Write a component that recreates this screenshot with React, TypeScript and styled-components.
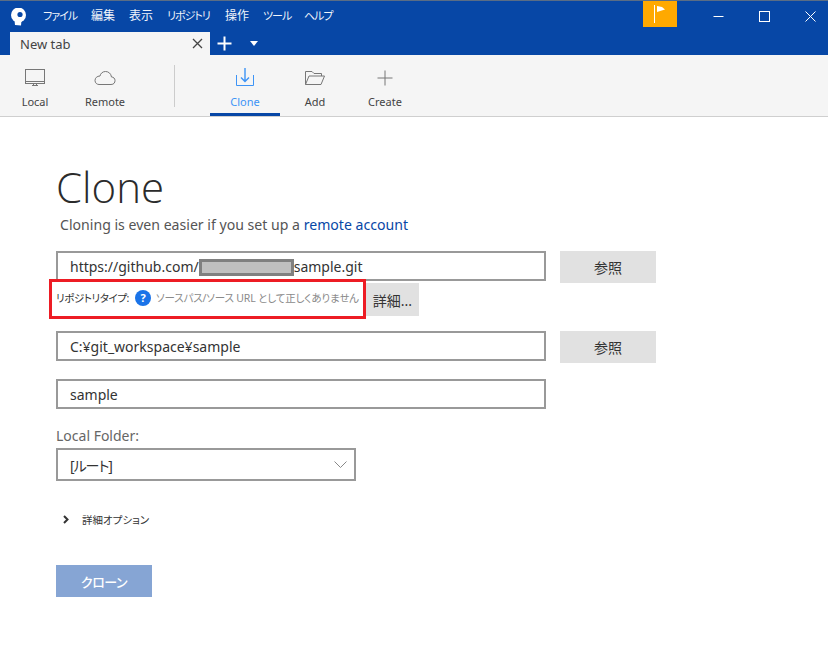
import React from "react";
import styled, { createGlobalStyle } from "styled-components";

const fontStack = `"Noto Sans", "Noto Sans CJK JP", sans-serif`;

const GlobalStyle = createGlobalStyle`
  html, body {
    margin: 0;
    padding: 0;
    background: #ffffff;
    font-family: ${fontStack};
    font-feature-settings: "palt";
  }
  * {
    box-sizing: border-box;
  }
`;

const Page = styled.div`
  width: 828px;
  height: 659px;
  overflow: hidden;
  display: flex;
  flex-direction: column;
`;

const TitleBar = styled.header`
  height: 55px;
  flex-shrink: 0;
  background: #0747a6;
  border-top: 1px solid #5a6d85;
  display: flex;
  flex-direction: column;
`;

const MenuRow = styled.div`
  height: 31px;
  display: flex;
`;

const LogoBox = styled.div`
  width: 43px;
  flex-shrink: 0;
  padding: 7px 0 0 10px;
`;

const MenuItem = styled.span<{ $w: number; $kana?: boolean }>`
  width: ${(p) => p.$w}px;
  flex-shrink: 0;
  padding-top: 6px;
  font-size: ${(p) => (p.$kana ? "11px" : "12px")};
  letter-spacing: ${(p) => (p.$kana ? "-1px" : "0")};
  line-height: 18px;
  color: #f0f4fa;
  white-space: nowrap;
`;

const FlagButton = styled.div`
  width: 34px;
  height: 26px;
  flex-shrink: 0;
  margin-left: auto;
  background: #ffa900;
  display: flex;
  align-items: center;
  justify-content: center;
`;

const WindowControls = styled.div`
  display: flex;
  flex-shrink: 0;
  margin: 0 -5px 0 18px;
`;

const WindowButton = styled.div`
  width: 46px;
  height: 30px;
  display: flex;
  align-items: center;
  justify-content: center;
`;

const TabRow = styled.div`
  height: 23px;
  display: flex;
  align-items: center;
  padding-left: 10px;
`;

const Tab = styled.div`
  width: 200px;
  height: 23px;
  background: #f5f5f5;
  display: flex;
  align-items: center;
  justify-content: space-between;
  padding: 0 7px 0 10px;
  font-size: 13px;
  color: #444444;
`;

const TabAction = styled.div<{ $w: number }>`
  width: ${(p) => p.$w}px;
  display: flex;
  justify-content: center;
`;

const Toolbar = styled.nav`
  height: 62px;
  flex-shrink: 0;
  background: #f5f5f5;
  border-bottom: 1px solid #cfcfcf;
  display: flex;
`;

const ToolGroup = styled.div`
  display: flex;
`;

const ToolDivider = styled.div`
  width: 1px;
  height: 42px;
  margin: 10px 35px 0 34px;
  background: #cccccc;
`;

const ToolItem = styled.div<{ $active?: boolean }>`
  width: 70px;
  height: 61px;
  display: flex;
  flex-direction: column;
  align-items: center;
  padding-top: 11px;
  font-size: 11px;
  color: ${(p) => (p.$active ? "#3d94f6" : "#444444")};
  border-bottom: 3px solid ${(p) => (p.$active ? "#0747a6" : "transparent")};
`;

const ToolIcon = styled.div`
  height: 23px;
  display: flex;
  align-items: center;
  justify-content: center;
`;

const ToolLabel = styled.span`
  line-height: 15px;
  margin-top: 5px;
`;

const Main = styled.main`
  padding: 41px 0 0 56px;
`;

const Heading = styled.h1`
  margin: 0;
  font-size: 42px;
  font-weight: 300;
  line-height: 58px;
  color: #2b2b2b;
  font-family: "Open Sans", ${fontStack};
`;

const Subtitle = styled.p`
  margin: 0 0 17px 4px;
  font-size: 14.1px;
  line-height: 18px;
  color: #555555;
`;

const RemoteLink = styled.a`
  color: #0747a6;
`;

const Row = styled.div`
  display: flex;
  gap: 14px;
`;

const TextField = styled.div`
  width: 490px;
  height: 30px;
  border: 2px solid #999999;
  background: #ffffff;
  padding-left: 12px;
  display: flex;
  align-items: center;
  font-size: 14px;
  color: #333333;
  white-space: nowrap;
`;

const Redacted = styled.span`
  width: 95px;
  height: 17px;
  margin-top: 2px;
  background: #c0c0c0;
  border: 3px solid #808080;
`;

const BrowseButton = styled.div`
  width: 96px;
  height: 32px;
  background: #e1e1e1;
  display: flex;
  align-items: center;
  justify-content: center;
  font-size: 14px;
  color: #333333;
`;

const ValidationRow = styled.div`
  position: relative;
  height: 48px;
  display: flex;
  align-items: flex-start;
`;

const ValidationText = styled.div`
  width: 310px;
  flex-shrink: 0;
  height: 29px;
  display: flex;
  align-items: center;
  white-space: nowrap;
`;

const RepoTypeLabel = styled.span`
  width: 73px;
  flex-shrink: 0;
  font-size: 10.5px;
  letter-spacing: -0.4px;
  color: #333333;
`;

const HelpDot = styled.span`
  width: 16px;
  height: 16px;
  flex-shrink: 0;
  margin: 0 5px 0 6px;
  border-radius: 50%;
  background: #1a73e8;
  color: #ffffff;
  font-size: 11px;
  font-weight: 700;
  display: flex;
  align-items: center;
  justify-content: center;
`;

const ValidationMessage = styled.span`
  font-size: 10.5px;
  letter-spacing: -0.15px;
  color: #8a8a8a;
`;

const DetailsButton = styled.div`
  width: 53px;
  height: 33px;
  background: #e1e1e1;
  display: flex;
  align-items: center;
  justify-content: center;
  font-size: 14px;
  color: #333333;
`;

const RedFrame = styled.div`
  position: absolute;
  left: -7px;
  top: -4px;
  width: 317px;
  height: 40px;
  border: 3px solid #ed1c24;
  pointer-events: none;
`;

const NameRow = styled.div`
  margin-top: 16px;
`;

const FieldLabel = styled.div`
  margin-top: 17px;
  font-size: 14px;
  line-height: 20px;
  color: #666666;
`;

const Select = styled.div`
  width: 300px;
  height: 33px;
  margin-top: 2px;
  border: 2px solid #999999;
  padding: 0 7px 0 12px;
  display: flex;
  align-items: center;
  justify-content: space-between;
  font-size: 14px;
  letter-spacing: -1px;
  color: #333333;
`;

const Expander = styled.div`
  margin: 29px 0 0 7px;
  height: 18px;
  display: flex;
  align-items: center;
  gap: 13px;
  font-size: 10.5px;
  color: #333333;
`;

const CloneButton = styled.div`
  width: 96px;
  height: 32px;
  margin-top: 37px;
  background: #86a5d4;
  color: #ffffff;
  display: flex;
  align-items: center;
  justify-content: center;
  font-size: 13px;
  letter-spacing: -0.5px;
  font-weight: 500;
`;

const menus: [string, number, boolean][] = [
  ["ファイル", 48, true],
  ["編集", 38, false],
  ["表示", 38, false],
  ["リポジトリ", 58, true],
  ["操作", 38, false],
  ["ツール", 41, true],
  ["ヘルプ", 60, true],
];

const Logo = () => (
  <svg width="17" height="18" viewBox="0 0 17 18">
    <circle cx="8.5" cy="7" r="7.5" fill="#ffffff" />
    <circle cx="10" cy="6.5" r="2.6" fill="#0747a6" />
    <path d="M4.5 12 L5 17 L11 17.5 L11.5 12 Z" fill="#ffffff" />
  </svg>
);

const gray = "#777777";

const App = () => (
  <Page>
    <GlobalStyle />
    <TitleBar>
      <MenuRow>
        <LogoBox>
          <Logo />
        </LogoBox>
        {menus.map(([label, w, kana]) => (
          <MenuItem key={label} $w={w} $kana={kana}>
            {label}
          </MenuItem>
        ))}
        <FlagButton>
          <svg width="16" height="20" viewBox="0 0 16 20">
            <path d="M2.5 1 V19" stroke="#fff" strokeWidth="1" />
            <path d="M5 2 L10 3 L13 5.5 L5 8 Z" fill="#fff" />
          </svg>
        </FlagButton>
        <WindowControls>
          <WindowButton>
            <svg width="11" height="11" viewBox="0 0 11 11">
              <path d="M0.5 5.5 H10.5" stroke="#fff" />
            </svg>
          </WindowButton>
          <WindowButton>
            <svg width="11" height="11" viewBox="0 0 11 11">
              <rect x="0.5" y="0.5" width="10" height="10" fill="none" stroke="#fff" />
            </svg>
          </WindowButton>
          <WindowButton>
            <svg width="11" height="11" viewBox="0 0 11 11">
              <path d="M0.5 0.5 L10.5 10.5 M10.5 0.5 L0.5 10.5" stroke="#fff" />
            </svg>
          </WindowButton>
        </WindowControls>
      </MenuRow>
      <TabRow>
        <Tab>
          New tab
          <svg width="11" height="11" viewBox="0 0 11 11">
            <path d="M1 1 L10 10 M10 1 L1 10" stroke="#444" strokeWidth="1.3" />
          </svg>
        </Tab>
        <TabAction $w={28}>
          <svg width="15" height="15" viewBox="0 0 15 15">
            <path d="M7.5 0.5 V14.5 M0.5 7.5 H14.5" stroke="#fff" strokeWidth="2" />
          </svg>
        </TabAction>
        <TabAction $w={32}>
          <svg width="8" height="5" viewBox="0 0 8 5">
            <path d="M0 0 H8 L4 5 Z" fill="#fff" />
          </svg>
        </TabAction>
      </TabRow>
    </TitleBar>
    <Toolbar>
      <ToolGroup>
        <ToolItem>
          <ToolIcon>
            <svg width="22" height="20" viewBox="0 0 22 20" fill="none" stroke={gray}>
              <rect x="1.5" y="1.5" width="19" height="14" />
              <path d="M1.5 13.5 H20.5 M8 17.5 H14 M9.5 15.5 V17.5 M12.5 15.5 V17.5" />
            </svg>
          </ToolIcon>
          <ToolLabel>Local</ToolLabel>
        </ToolItem>
        <ToolItem>
          <ToolIcon>
            <svg width="22" height="18" viewBox="0 0 22 18" fill="none" stroke={gray}>
              <path d="M5 15.5 H17 C20 15.5 21 13.5 21 11.5 C21 9.5 19.5 8 17.5 8 C17 4.5 14.5 2.5 11.5 2.5 C8.5 2.5 6.5 4.5 6 7 C3 7 1 9 1 11.5 C1 14 3 15.5 5 15.5 Z" />
            </svg>
          </ToolIcon>
          <ToolLabel>Remote</ToolLabel>
        </ToolItem>
      </ToolGroup>
      <ToolDivider />
      <ToolGroup>
        <ToolItem $active>
          <ToolIcon>
            <svg width="20" height="20" viewBox="0 0 20 20" fill="none" stroke="#3d94f6">
              <path d="M1.5 7 V17.5 H18.5 V7" />
              <path d="M10 0 V13 M6 9.5 L10 13.5 L14 9.5" strokeWidth="1.4" />
            </svg>
          </ToolIcon>
          <ToolLabel>Clone</ToolLabel>
        </ToolItem>
        <ToolItem>
          <ToolIcon>
            <svg width="22" height="16" viewBox="0 0 22 16" fill="none" stroke={gray}>
              <path d="M1.5 14.5 V1.5 H8 L10 3.5 H17.5 V6" />
              <path d="M1.5 14.5 L5 6 H20.5 L17 14.5 Z" />
            </svg>
          </ToolIcon>
          <ToolLabel>Add</ToolLabel>
        </ToolItem>
        <ToolItem>
          <ToolIcon>
            <svg width="16" height="16" viewBox="0 0 16 16" fill="none" stroke={gray}>
              <path d="M8 0.5 V15.5 M0.5 8 H15.5" />
            </svg>
          </ToolIcon>
          <ToolLabel>Create</ToolLabel>
        </ToolItem>
      </ToolGroup>
    </Toolbar>
    <Main>
      <Heading>Clone</Heading>
      <Subtitle>
        Cloning is even easier if you set up a <RemoteLink>remote account</RemoteLink>
      </Subtitle>
      <Row>
        <TextField>
          https://github.com/
          <Redacted />
          sample.git
        </TextField>
        <BrowseButton>参照</BrowseButton>
      </Row>
      <ValidationRow>
        <ValidationText>
          <RepoTypeLabel>リポジトリタイプ:</RepoTypeLabel>
          <HelpDot>?</HelpDot>
          <ValidationMessage>ソースパス/ソース URL として正しくありません</ValidationMessage>
        </ValidationText>
        <DetailsButton>詳細...</DetailsButton>
        <RedFrame />
      </ValidationRow>
      <Row>
        <TextField>C:¥git_workspace¥sample</TextField>
        <BrowseButton>参照</BrowseButton>
      </Row>
      <NameRow>
        <TextField>sample</TextField>
      </NameRow>
      <FieldLabel>Local Folder:</FieldLabel>
      <Select>
        [ルート]
        <svg width="13" height="7" viewBox="0 0 13 7" fill="none" stroke="#888888">
          <path d="M0.5 0.5 L6.5 6.5 L12.5 0.5" />
        </svg>
      </Select>
      <Expander>
        <svg width="6" height="9" viewBox="0 0 6 9" fill="none" stroke="#333333" strokeWidth="2">
          <path d="M1 1 L4.5 4.5 L1 8" />
        </svg>
        詳細オプション
      </Expander>
      <CloneButton>クローン</CloneButton>
    </Main>
  </Page>
);

export default App;
